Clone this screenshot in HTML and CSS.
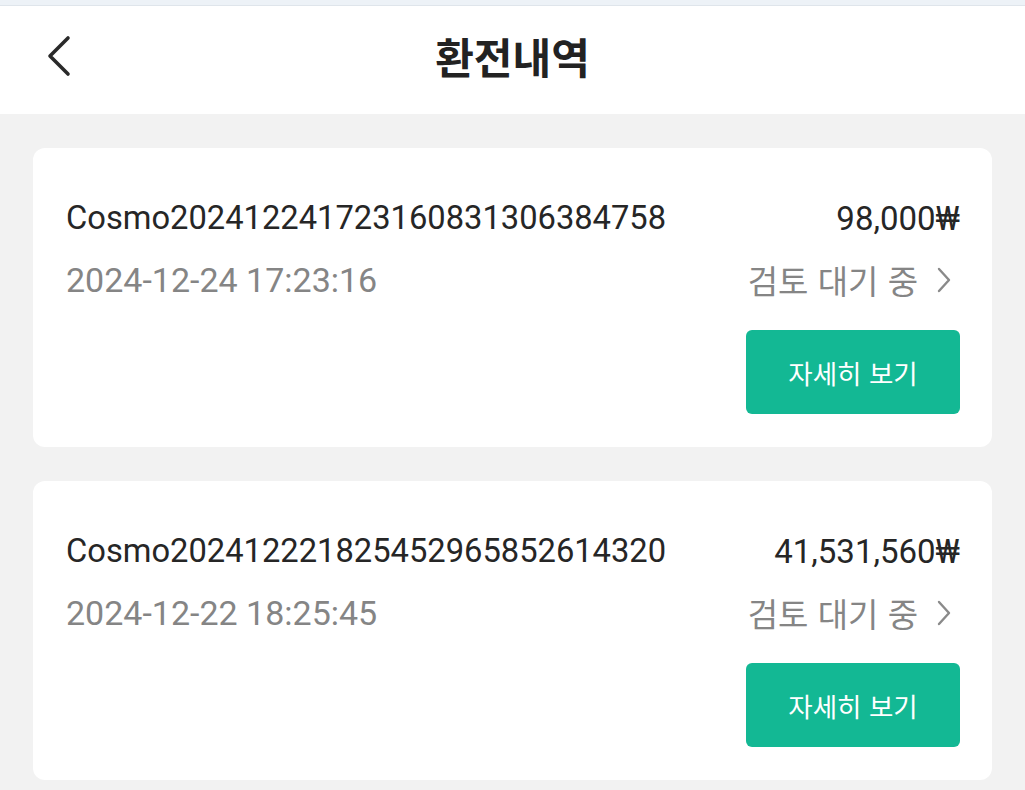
FILE: index.html
```html
<!DOCTYPE html>
<html lang="ko">
<head>
    <meta charset="UTF-8">
    <meta name="viewport" content="width=device-width, initial-scale=1.0">
    <title>환전내역</title>
    <link rel="stylesheet" href="styles.css">
</head>
<body>
    <div class="status-strip"></div>
    <header class="top-bar">
        <a class="back-button" href="#">
            <svg width="30" height="44" viewBox="0 0 30 44">
                <polyline points="24,4 6,22 24,40" fill="none" stroke="#2a2a2a" stroke-width="3.6" stroke-linecap="round" stroke-linejoin="round"/>
            </svg>
        </a>
        <h1 class="page-title">환전내역</h1>
    </header>

    <main class="record-list">
        <div class="record-card">
            <div class="record-row">
                <span class="record-id">Cosmo202412241723160831306384758</span>
                <span class="record-amount">98,000₩</span>
            </div>
            <div class="record-row sub">
                <span class="record-date">2024-12-24 17:23:16</span>
                <span class="record-status">검토 대기 중
                    <svg width="16" height="28" viewBox="0 0 16 28">
                        <polyline points="3,3 13,14 3,25" fill="none" stroke="#8a8a8a" stroke-width="2.4" stroke-linecap="round" stroke-linejoin="round"/>
                    </svg>
                </span>
            </div>
            <div class="record-actions">
                <button class="detail-button">자세히 보기</button>
            </div>
        </div>

        <div class="record-card">
            <div class="record-row">
                <span class="record-id">Cosmo202412221825452965852614320</span>
                <span class="record-amount">41,531,560₩</span>
            </div>
            <div class="record-row sub">
                <span class="record-date">2024-12-22 18:25:45</span>
                <span class="record-status">검토 대기 중
                    <svg width="16" height="28" viewBox="0 0 16 28">
                        <polyline points="3,3 13,14 3,25" fill="none" stroke="#8a8a8a" stroke-width="2.4" stroke-linecap="round" stroke-linejoin="round"/>
                    </svg>
                </span>
            </div>
            <div class="record-actions">
                <button class="detail-button">자세히 보기</button>
            </div>
        </div>
    </main>
</body>
</html>
```

FILE: styles.css
```css
* {
    box-sizing: border-box;
}

body {
    margin: 0;
    background: #f2f2f2;
    font-family: Roboto, "Noto Sans CJK KR", sans-serif;
    color: #262626;
}

.status-strip {
    height: 6px;
    background: #edf2f7;
    border-bottom: 1px solid #dfe5eb;
}

.top-bar {
    height: 108px;
    background: #fff;
    display: flex;
    align-items: center;
    justify-content: center;
    position: relative;
}

.back-button {
    position: absolute;
    left: 44px;
    top: 28px;
    display: block;
}

.page-title {
    margin: 0;
    font-family: "Noto Sans CJK KR", sans-serif;
    font-size: 42px;
    font-weight: 700;
    color: #222;
    padding-bottom: 10px;
}

.record-list {
    padding: 34px 33px;
    display: flex;
    flex-direction: column;
    gap: 34px;
}

.record-card {
    background: #fff;
    border-radius: 12px;
    padding: 50px 32px 33px 33px;
}

.record-row {
    display: flex;
    justify-content: space-between;
    align-items: center;
    height: 40px;
}

.record-row.sub {
    margin-top: 22px;
}

.record-id {
    font-size: 32.7px;
    color: #262626;
}

.record-amount {
    font-size: 33px;
    color: #262626;
}

.record-date {
    font-size: 34px;
    color: #858585;
}

.record-status {
    display: flex;
    align-items: center;
    gap: 18px;
    font-family: "Noto Sans CJK KR", sans-serif;
    font-size: 33px;
    color: #858585;
    padding-right: 8px;
}

.record-actions {
    display: flex;
    justify-content: flex-end;
    margin-top: 30px;
}

.detail-button {
    width: 214px;
    height: 84px;
    border: none;
    border-radius: 6px;
    background: #13b894;
    color: #fff;
    font-family: "Noto Sans CJK KR", sans-serif;
    font-size: 26.5px;
}
```
